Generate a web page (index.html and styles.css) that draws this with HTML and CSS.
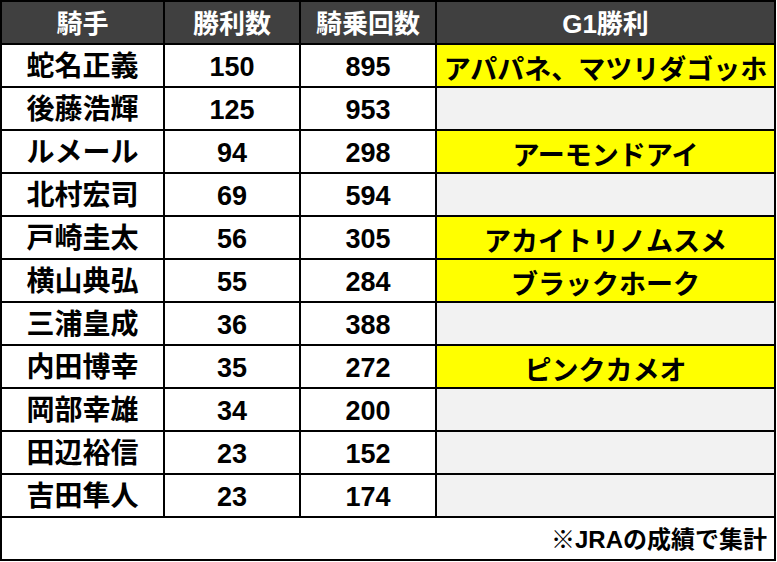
FILE: index.html
```html
<!DOCTYPE html>
<html lang="ja">
<head>
<meta charset="utf-8">
<title>騎手成績</title>
<link rel="stylesheet" href="styles.css">
</head>
<body>
<div class="table">
  <div class="cell head">騎手</div>
  <div class="cell head">勝利数</div>
  <div class="cell head">騎乗回数</div>
  <div class="cell head">G1勝利</div>

  <div class="cell name">蛇名正義</div><div class="cell num">150</div><div class="cell num">895</div><div class="cell g1 win wide">アパパネ、マツリダゴッホ</div>
  <div class="cell name">後藤浩輝</div><div class="cell num">125</div><div class="cell num">953</div><div class="cell g1"></div>
  <div class="cell name">ルメール</div><div class="cell num">94</div><div class="cell num">298</div><div class="cell g1 win">アーモンドアイ</div>
  <div class="cell name">北村宏司</div><div class="cell num">69</div><div class="cell num">594</div><div class="cell g1"></div>
  <div class="cell name">戸崎圭太</div><div class="cell num">56</div><div class="cell num">305</div><div class="cell g1 win">アカイトリノムスメ</div>
  <div class="cell name">横山典弘</div><div class="cell num">55</div><div class="cell num">284</div><div class="cell g1 win">ブラックホーク</div>
  <div class="cell name">三浦皇成</div><div class="cell num">36</div><div class="cell num">388</div><div class="cell g1"></div>
  <div class="cell name">内田博幸</div><div class="cell num">35</div><div class="cell num">272</div><div class="cell g1 win">ピンクカメオ</div>
  <div class="cell name">岡部幸雄</div><div class="cell num">34</div><div class="cell num">200</div><div class="cell g1"></div>
  <div class="cell name">田辺裕信</div><div class="cell num">23</div><div class="cell num">152</div><div class="cell g1"></div>
  <div class="cell name">吉田隼人</div><div class="cell num">23</div><div class="cell num">174</div><div class="cell g1"></div>

  <div class="cell foot">※JRAの成績で集計</div>
</div>
</body>
</html>
```

FILE: styles.css
```css
html, body {
  margin: 0;
  padding: 0;
  background: #ffffff;
}

body {
  font-family: "Liberation Sans", "Noto Sans CJK JP", sans-serif;
  font-weight: bold;
  color: #000000;
}

.table {
  display: grid;
  grid-template-columns: 161px 134px 134px 337px;
  grid-auto-rows: 41px;
  gap: 2px;
  padding: 2px;
  width: 772px;
  background: #000000;
}

.cell {
  display: flex;
  align-items: center;
  justify-content: center;
  background: #ffffff;
  font-size: 27px;
  line-height: 1;
  white-space: nowrap;
  overflow: hidden;
  padding-top: 3px;
  box-sizing: border-box;
}

.head {
  background: #404040;
  color: #ffffff;
  font-size: 26px;
}

.name {
  font-size: 28px;
}

.g1 {
  background: #f2f2f2;
  font-family: "Noto Sans CJK JP", sans-serif;
  font-size: 27px;
}

.g1.win {
  background: #ffff00;
}

.g1.wide {
  font-size: 27px;
  letter-spacing: 0;
}

.foot {
  grid-column: 1 / -1;
  justify-content: flex-end;
  padding-right: 7px;
  font-size: 24px;
}
```
